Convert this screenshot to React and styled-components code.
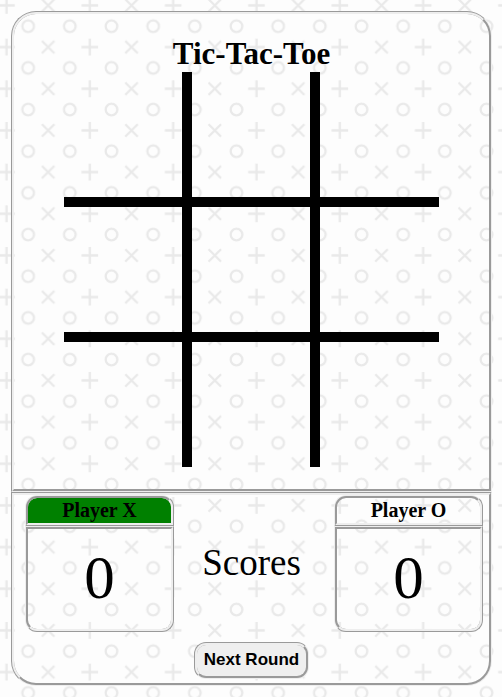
import React, { useState } from "react";
import styled, { createGlobalStyle } from "styled-components";

const backdrop = `
<svg xmlns="http://www.w3.org/2000/svg" viewBox="0 0 600 600" width="250" height="250">
  <defs>
    <pattern id="p" width="200" height="100" patternUnits="userSpaceOnUse">
      <g fill="none" stroke="#e9e9e9" stroke-width="5.5">
        <circle cx="18" cy="75" r="14"/>
        <circle cx="118" cy="75" r="14"/>
        <path d="M46 25H86M66 5V45M151 10L181 40M181 10L151 40"/>
      </g>
    </pattern>
  </defs>
  <rect width="600" height="600" fill="url(#p)"/>
</svg>`;

const GlobalStyle = createGlobalStyle`
  *, *::before, *::after {
    box-sizing: border-box;
  }

  body {
    margin: 0;
    padding: 11px 10px 11px 11px;
    color: #000;
    font-family: "Liberation Serif", "Times New Roman", serif;
    background-color: #fdfdfd;
    background-image: url("data:image/svg+xml,${encodeURIComponent(backdrop)}");
    background-position: -21px -5px;
    background-size: 250px 250px;
  }
`;

const Game = styled.main`
  display: flex;
  flex-direction: column;
`;

const Panel = styled.section`
  border: 3px groove #eee;
`;

const BoardPanel = styled(Panel)`
  display: flex;
  flex-direction: column;
  align-items: center;
  padding: 22px 0;
  border-radius: 25px 25px 0 0;
`;

const ScorePanel = styled(Panel)`
  display: flex;
  flex-direction: column;
  align-items: center;
  gap: 10px;
  padding-bottom: 4px;
  border-radius: 0 0 25px 25px;
`;

const Title = styled.h1`
  margin: 0;
  font-size: 31px;
  line-height: 36px;
`;

const Board = styled.div`
  display: grid;
  grid-template-columns: 128px 128px 119px;
  grid-template-rows: 135px 135px 125px;
`;

const Cell = styled.button`
  padding: 0;
  border: 0 solid #000;
  border-right-width: ${({ $column }) => ($column < 2 ? "10px" : "0")};
  border-bottom-width: ${({ $row }) => ($row < 2 ? "10px" : "0")};
  background: transparent;
  color: #000;
  font: 90px "Liberation Serif", "Times New Roman", serif;
`;

const ScoreRow = styled.div`
  display: grid;
  grid-template-columns: 149px 1fr 149px;
  align-items: center;
  width: 100%;
  padding: 0 6px 0 11px;
`;

const PlayerName = styled.h2`
  margin: 0;
  border: 3px ridge #eee;
  border-radius: 12px 12px 0 0;
  background-color: ${({ $active }) => ($active ? "#008000" : "transparent")};
  font-size: 20px;
  line-height: 25px;
  text-align: center;
`;

const Points = styled.p`
  margin: 0;
  padding-bottom: 2px;
  border: 3px ridge #eee;
  border-radius: 0 0 12px 12px;
  font-size: 61px;
  line-height: 98px;
  text-align: center;
`;

const ScoresLabel = styled.p`
  margin: 0;
  padding: 0 5px 2px 0;
  font-size: 37px;
  text-align: center;
`;

const NextButton = styled.button`
  height: 37px;
  padding: 0 7px 2px;
  border: 3px groove #eee;
  border-radius: 12px;
  background-color: #efefef;
  color: #000;
  font: bold 17px "Liberation Sans", Arial, sans-serif;
`;

const emptyBoard = Array(9).fill("");

function PlayerCard({ name, points, active }) {
  return (
    <article>
      <PlayerName $active={active}>{name}</PlayerName>
      <Points>{points}</Points>
    </article>
  );
}

export default function App() {
  const [marks, setMarks] = useState(emptyBoard);
  const [turn, setTurn] = useState("X");

  const play = (index) => {
    if (marks[index]) return;
    setMarks(marks.map((mark, i) => (i === index ? turn : mark)));
    setTurn(turn === "X" ? "O" : "X");
  };

  const nextRound = () => {
    setMarks(emptyBoard);
    setTurn("X");
  };

  return (
    <>
      <GlobalStyle />
      <Game>
        <BoardPanel>
          <Title>Tic-Tac-Toe</Title>
          <Board>
            {marks.map((mark, i) => (
              <Cell
                key={i}
                type="button"
                $row={Math.floor(i / 3)}
                $column={i % 3}
                aria-label={`Row ${Math.floor(i / 3) + 1}, column ${(i % 3) + 1}`}
                onClick={() => play(i)}
              >
                {mark}
              </Cell>
            ))}
          </Board>
        </BoardPanel>
        <ScorePanel>
          <ScoreRow>
            <PlayerCard name="Player X" points={0} active={turn === "X"} />
            <ScoresLabel>Scores</ScoresLabel>
            <PlayerCard name="Player O" points={0} active={turn === "O"} />
          </ScoreRow>
          <NextButton type="button" onClick={nextRound}>
            Next Round
          </NextButton>
        </ScorePanel>
      </Game>
    </>
  );
}
